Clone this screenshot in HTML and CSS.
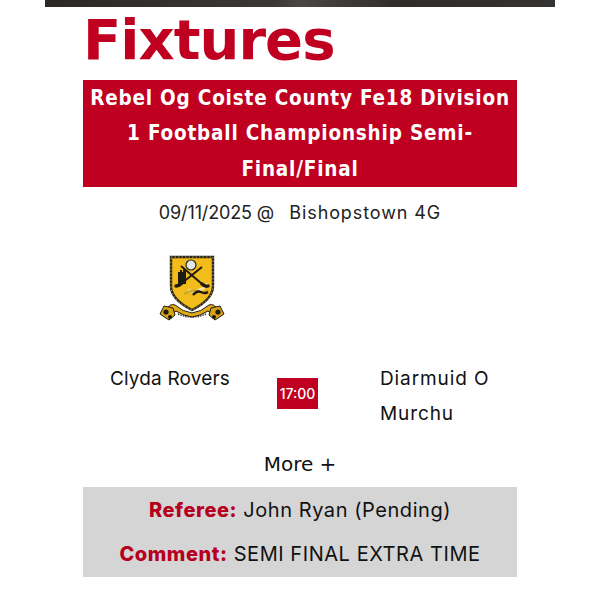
FILE: index.html
```html
<!DOCTYPE html>
<html lang="en">
<head>
<meta charset="utf-8">
<title>Fixtures</title>
<link rel="stylesheet" href="styles.css">
</head>
<body>
<div class="hero"></div>
<main class="content">
  <h1 class="title">Fixtures</h1>
  <h2 class="comp">Rebel Og Coiste County Fe18 Division 1 Football Championship Semi-<br>Final/Final</h2>
  <p class="when"><span class="date">09/11/2025 @</span> &nbsp; <span class="venue">Bishopstown 4G</span></p>
  <div class="crests">
    <svg class="crest" viewBox="0 0 70 70" width="70" height="70" aria-label="Clyda Rovers crest">
      <path d="M13 3H55V32C55 44 44 51 34 56C24 51 13 44 13 32Z" fill="#f2bd1a" stroke="#2a2418" stroke-width="2.4"/>
      <path d="M13 3H55V32C55 44 44 51 34 56C24 51 13 44 13 32Z" fill="none" stroke="#d9c27a" stroke-width=".8" stroke-dasharray="1.5 2"/>
      <path d="M20 30V18h2v-2h2v2h1v-3l3 2v13Z" fill="#1e1a12"/>
      <path d="M30 36q9 5 20-6" stroke="#f7e9a8" stroke-width="3" fill="none"/>
      <path d="M26 40q10-6 16-2t8-2" stroke="#cfa92e" stroke-width="2.5" fill="none"/>
      <path d="M35 41q4-5 8-3t7 0" stroke="#1e1a12" stroke-width="2.4" fill="none"/>
      <path d="M44 13L24 29" stroke="#1e1a12" stroke-width="2" fill="none"/>
      <path d="M24 29q-3 3-6 3" stroke="#1e1a12" stroke-width="3.4" fill="none" stroke-linecap="round"/>
      <path d="M23 12L44 30" stroke="#1e1a12" stroke-width="2" fill="none"/>
      <path d="M44 30q3 3 6 2" stroke="#1e1a12" stroke-width="3.4" fill="none" stroke-linecap="round"/>
      <circle cx="33" cy="11" r="5" fill="#dfe8e4" stroke="#2a2418" stroke-width="1.2"/>
      <path d="M8 56q4-7 9-5 8 7 17 8 9-1 17-8 5-2 9 5-5 5-10 1-8 5-16 6-8-1-16-6-5 4-10-1Z" fill="#e3ac14" stroke="#1e1a12" stroke-width="1"/>
      <path d="M2 60l4-8 9 2 2 7-6 5Z" fill="#d9a414" stroke="#1e1a12"/>
      <path d="M66 60l-4-8-9 2-2 7 6 5Z" fill="#d9a414" stroke="#1e1a12"/>
      <circle cx="8" cy="58" r="2.6" fill="#1e1a12"/>
      <circle cx="12" cy="63" r="2" fill="#1e1a12"/>
      <circle cx="60" cy="58" r="2.6" fill="#1e1a12"/>
      <circle cx="56" cy="63" r="2" fill="#1e1a12"/>
      <path d="M20 60q14 6 28 0" stroke="#3a2f14" stroke-width="1.4" stroke-dasharray="1.5 1" fill="none"/>
    </svg>
  </div>
  <div class="match">
    <div class="team">Clyda Rovers</div>
    <div class="time">17:00</div>
    <div class="team team-away">Diarmuid O Murchu</div>
  </div>
  <div class="more">More +</div>
  <div class="details">
    <p class="detail"><strong>Referee:</strong> John Ryan (Pending)</p>
    <p class="detail"><strong>Comment:</strong> SEMI FINAL EXTRA TIME</p>
  </div>
</main>
</body>
</html>
```
FILE: styles.css
```css
* { box-sizing: border-box; }
html, body { margin: 0; padding: 0; background: #fff; }
body { font-family: "Inter", "Open Sans", sans-serif; color: #111; overflow: hidden; }
.hero {
  width: 510px; height: 7px; margin: 0 auto;
  background: linear-gradient(90deg, #2b2828, #3a3736 45%, #4a4645 50%, #2f2c2c 70%, #353232);
}
.content { width: 434px; margin: 0 auto; }
.title {
  margin: 0; height: 73px;
  font: bold 56px/66px "DejaVu Sans", sans-serif;
  letter-spacing: -.95px; color: #bf0020;
}
.comp {
  margin: 0; padding: 1px 0 0; height: 107px; background: #bf0020; color: #fff; text-align: center;
  font: bold 20.5px/35.3px "DejaVu Sans", sans-serif; font-stretch: condensed; letter-spacing: .8px;
}
.when { margin: 0; height: 52px; font-size: 18px; line-height: 52px; text-align: center; color: #222; }
.date { letter-spacing: -.13px; }
.venue { letter-spacing: .9px; }
.crests { height: 122px; padding: 15px 0 0 75px; }
.crest { display: block; }
.match { display: grid; grid-template-columns: 194px 41px 199px; font-size: 19px; line-height: 35px; letter-spacing: .15px; }
.team { padding-left: 27px; }
.team-away { padding-left: 62px; letter-spacing: .9px; }
.time {
  width: 41px; height: 31px; margin-top: 17px;
  background: #bf0020; color: #fff; font-size: 14px; line-height: 31px; text-align: center; font-weight: 500; letter-spacing: 0;
}
.more { height: 56px; font: 20px/66px "DejaVu Sans", sans-serif; text-align: center; }
.details { background: #d5d5d5; height: 90px; padding-top: 1px; }
.detail { margin: 0; font-size: 20px; line-height: 44px; text-align: center; letter-spacing: .55px; }
.detail strong { color: #b5001e; font-weight: 800; }
```
